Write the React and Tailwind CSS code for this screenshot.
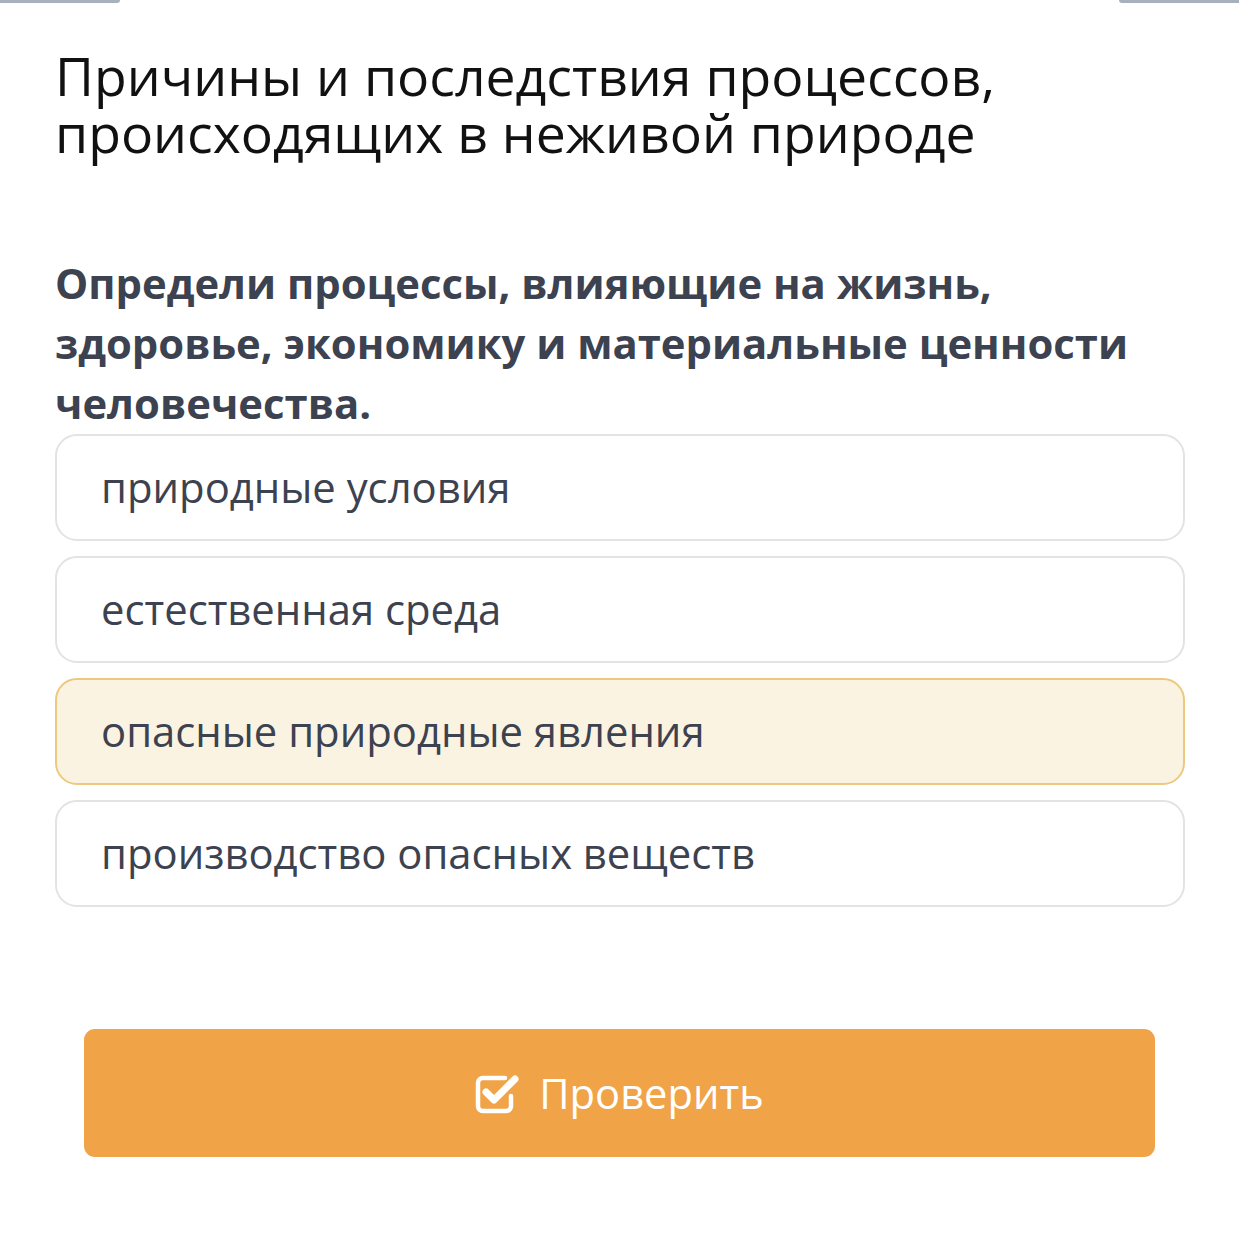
import React from "react";

const options = [
  { text: "природные условия", active: false },
  { text: "естественная среда", active: false },
  { text: "опасные природные явления", active: true },
  { text: "производство опасных веществ", active: false },
];

function CheckIcon() {
  return (
    <svg width="46" height="42" viewBox="0 0 46 42" fill="none">
      <path
        d="M30 6 H8 a5 5 0 0 0 -5 5 V34 a5 5 0 0 0 5 5 H31 a5 5 0 0 0 5 -5 V24"
        stroke="white"
        strokeWidth="4.5"
        strokeLinecap="round"
        strokeLinejoin="round"
      />
      <path
        d="M11 20 L19 28 L40 7"
        stroke="white"
        strokeWidth="7"
        strokeLinecap="round"
        strokeLinejoin="round"
      />
    </svg>
  );
}

export default function App() {
  return (
    <div
      className="relative w-[1239px] h-[1240px] bg-white overflow-hidden"
      style={{ fontFamily: '"Open Sans", "Noto Sans", sans-serif' }}
    >
      <div className="absolute left-0 top-0 w-[120px] h-[3px] bg-[#a7b1bc] rounded-br-[3px]" />
      <div className="absolute right-0 top-0 w-[120px] h-[3px] bg-[#a7b1bc] rounded-bl-[3px]" />

      <div className="px-[55px] pt-[47px]">
        <h1 className="text-[53.5px] leading-[57px] text-[#111111] font-normal">
          Причины и последствия процессов,
          <br />
          происходящих в неживой природе
        </h1>

        <p className="mt-[92px] text-[41.8px] leading-[60px] font-bold text-[#3c4250]">
          Определи процессы, влияющие на жизнь,
          <br />
          здоровье, экономику и материальные ценности
          <br />
          человечества.
        </p>

        <div className="mt-[1px] flex flex-col gap-[15px] w-[1130px]">
          {options.map((o) => (
            <div
              key={o.text}
              className={
                o.active
                  ? "h-[107px] rounded-[22px] border-2 border-[#ecc97f] bg-[#fbf3e2] flex items-center pl-[44px] text-[41.8px] text-[#3c4250]"
                  : "h-[107px] rounded-[22px] border-2 border-[#e3e3e3] bg-white flex items-center pl-[44px] text-[41.8px] text-[#3c4250]"
              }
            >
              {o.text}
            </div>
          ))}
        </div>
      </div>

      <div className="px-[84px] mt-[122px]">
        <button className="w-[1071px] h-[128px] rounded-[11px] bg-[#f0a347] flex items-center justify-center gap-[18px] text-white text-[41.7px]">
          <CheckIcon />
          <span>Проверить</span>
        </button>
      </div>
    </div>
  );
}
